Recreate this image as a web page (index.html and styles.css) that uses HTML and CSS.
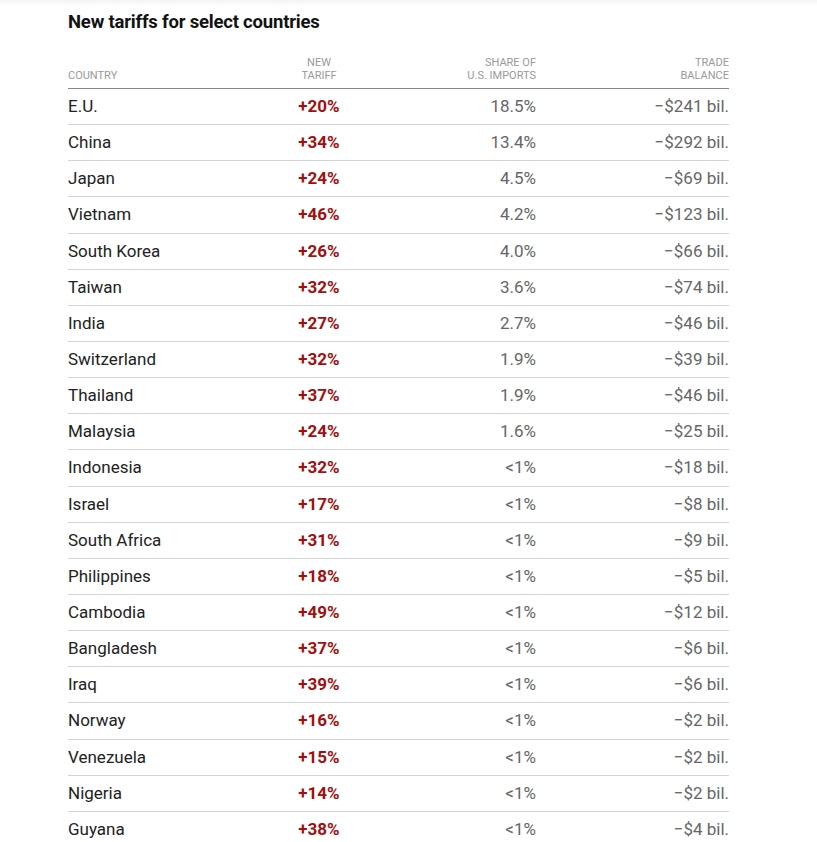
FILE: index.html
```html
<!DOCTYPE html>
<html lang="en">
<head>
<meta charset="utf-8">
<title>New tariffs for select countries</title>
<link rel="stylesheet" href="styles.css">
</head>
<body>
<div class="topbar"></div>
<main class="wrap">
  <h2 class="title">New tariffs for select countries</h2>
  <div class="table">
    <div class="row head">
      <div class="c country">Country</div>
      <div class="c tariff">New<br>tariff</div>
      <div class="c share">Share of<br>U.S. imports</div>
      <div class="c trade">Trade<br>balance</div>
    </div>
    <div class="row"><div class="c country">E.U.</div><div class="c tariff">+20%</div><div class="c share">18.5%</div><div class="c trade">−$241 bil.</div></div>
    <div class="row"><div class="c country">China</div><div class="c tariff">+34%</div><div class="c share">13.4%</div><div class="c trade">−$292 bil.</div></div>
    <div class="row"><div class="c country">Japan</div><div class="c tariff">+24%</div><div class="c share">4.5%</div><div class="c trade">−$69 bil.</div></div>
    <div class="row"><div class="c country">Vietnam</div><div class="c tariff">+46%</div><div class="c share">4.2%</div><div class="c trade">−$123 bil.</div></div>
    <div class="row"><div class="c country">South Korea</div><div class="c tariff">+26%</div><div class="c share">4.0%</div><div class="c trade">−$66 bil.</div></div>
    <div class="row"><div class="c country">Taiwan</div><div class="c tariff">+32%</div><div class="c share">3.6%</div><div class="c trade">−$74 bil.</div></div>
    <div class="row"><div class="c country">India</div><div class="c tariff">+27%</div><div class="c share">2.7%</div><div class="c trade">−$46 bil.</div></div>
    <div class="row"><div class="c country">Switzerland</div><div class="c tariff">+32%</div><div class="c share">1.9%</div><div class="c trade">−$39 bil.</div></div>
    <div class="row"><div class="c country">Thailand</div><div class="c tariff">+37%</div><div class="c share">1.9%</div><div class="c trade">−$46 bil.</div></div>
    <div class="row"><div class="c country">Malaysia</div><div class="c tariff">+24%</div><div class="c share">1.6%</div><div class="c trade">−$25 bil.</div></div>
    <div class="row"><div class="c country">Indonesia</div><div class="c tariff">+32%</div><div class="c share">&lt;1%</div><div class="c trade">−$18 bil.</div></div>
    <div class="row"><div class="c country">Israel</div><div class="c tariff">+17%</div><div class="c share">&lt;1%</div><div class="c trade">−$8 bil.</div></div>
    <div class="row"><div class="c country">South Africa</div><div class="c tariff">+31%</div><div class="c share">&lt;1%</div><div class="c trade">−$9 bil.</div></div>
    <div class="row"><div class="c country">Philippines</div><div class="c tariff">+18%</div><div class="c share">&lt;1%</div><div class="c trade">−$5 bil.</div></div>
    <div class="row"><div class="c country">Cambodia</div><div class="c tariff">+49%</div><div class="c share">&lt;1%</div><div class="c trade">−$12 bil.</div></div>
    <div class="row"><div class="c country">Bangladesh</div><div class="c tariff">+37%</div><div class="c share">&lt;1%</div><div class="c trade">−$6 bil.</div></div>
    <div class="row"><div class="c country">Iraq</div><div class="c tariff">+39%</div><div class="c share">&lt;1%</div><div class="c trade">−$6 bil.</div></div>
    <div class="row"><div class="c country">Norway</div><div class="c tariff">+16%</div><div class="c share">&lt;1%</div><div class="c trade">−$2 bil.</div></div>
    <div class="row"><div class="c country">Venezuela</div><div class="c tariff">+15%</div><div class="c share">&lt;1%</div><div class="c trade">−$2 bil.</div></div>
    <div class="row"><div class="c country">Nigeria</div><div class="c tariff">+14%</div><div class="c share">&lt;1%</div><div class="c trade">−$2 bil.</div></div>
    <div class="row"><div class="c country">Guyana</div><div class="c tariff">+38%</div><div class="c share">&lt;1%</div><div class="c trade">−$4 bil.</div></div>
  </div>
</main>
</body>
</html>
```
FILE: styles.css
```css
html, body {
  margin: 0;
  padding: 0;
  background: #fff;
}
body {
  font-family: Roboto, "Liberation Sans", Arial, sans-serif;
  color: #222;
}
.topbar {
  height: 6px;
  background: linear-gradient(#f3f3f3, #fff);
}
.wrap {
  width: 661px;
  margin-left: 68px;
}
.title {
  margin: 5px 0 0;
  font-size: 18.5px;
  line-height: 22px;
  font-weight: 700;
  color: #121212;
  letter-spacing: -0.2px;
}
.table {
  margin-top: 23px;
}
.row {
  display: grid;
  grid-template-columns: 201px 100px 167px 193px;
  align-items: center;
  height: 35.15px;
  border-bottom: 1px solid #d4d4d4;
  font-size: 17px;
  line-height: 20px;
}
.row .c {
  padding-bottom: 1px;
}
.row.head {
  height: auto;
  align-items: end;
  border-bottom: 1px solid #888;
  padding-bottom: 6px;
  font-size: 11px;
  line-height: 13px;
  text-transform: uppercase;
  color: #999;
}
.row.head .c {
  padding-bottom: 0;
  color: #999;
  font-weight: 400;
}
.country { text-align: left; color: #222; }
.tariff { text-align: center; font-weight: 700; color: #a30f0f; }
.share { text-align: right; color: #666; }
.trade { text-align: right; color: #666; }
```
